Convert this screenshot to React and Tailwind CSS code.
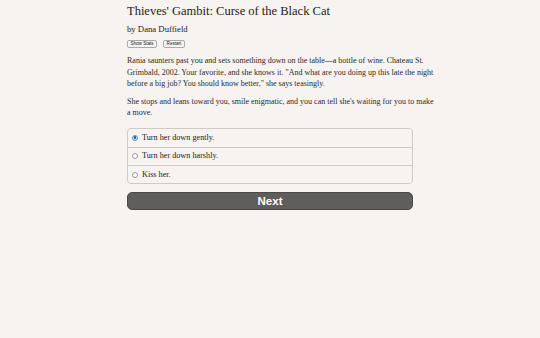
import { useState } from 'react';

const choices = ['Turn her down gently.', 'Turn her down harshly.', 'Kiss her.'];

const para1 = [
    'Rania saunters past you and sets something down on the table—a bottle of wine. Chateau St.',
    'Grimbald, 2002. Your favorite, and she knows it. "And what are you doing up this late the night',
    'before a big job? You should know better," she says teasingly.',
];
const para2 = [
    "She stops and leans toward you, smile enigmatic, and you can tell she's waiting for you to make",
    'a move.',
];

export default function App() {
    const [selected, setSelected] = useState(0);

    return (
        <div className="min-h-[338px] bg-[#f7f3f0] text-[#222] font-['Liberation_Serif',serif]">
            <div className="w-[286px] ml-[127px] pt-[2px]">
                <h1 className="text-[12.5px] leading-[18px] text-[#222]">Thieves' Gambit: Curse of the Black Cat</h1>
                <p className="text-[8.7px] leading-[12px] mt-[3px]">by Dana Duffield</p>

                {/* stats / restart */}
                <div className="flex gap-[6px] mt-[5px]">
                    <button className="h-[8px] w-[30px] text-[4.6px] leading-[6px] font-['Liberation_Sans',sans-serif] border border-[#aaa] rounded-[2px] bg-[#f4f4f4]">Show Stats</button>
                    <button className="h-[8px] w-[22px] text-[4.6px] leading-[6px] font-['Liberation_Sans',sans-serif] border border-[#aaa] rounded-[2px] bg-[#f4f4f4]">Restart</button>
                </div>

                <div className="text-[8px] leading-[11.5px] mt-[7px] text-[#2a2a2a] whitespace-nowrap">
                    {para1.map(l => <p key={l}>{l}</p>)}
                </div>
                <div className="text-[8px] leading-[11.5px] mt-[6px] text-[#2a2a2a] whitespace-nowrap">
                    {para2.map(l => <p key={l}>{l}</p>)}
                </div>

                <div className="mt-[9px] border border-[#cfcac6] rounded-[4px] overflow-hidden">
                    {choices.map((c, i) => (
                        <label
                            key={c}
                            onClick={() => setSelected(i)}
                            className={`flex items-center gap-[4px] h-[18.3px] px-[4px] text-[8.2px] cursor-pointer ${i > 0 ? 'border-t border-[#cfcac6]' : ''}`}
                        >
                            <span className={`w-[6px] h-[6px] rounded-full border flex items-center justify-center ${selected === i ? 'border-[#5a8fd0] bg-[#cfe0f5]' : 'border-[#999] bg-white'}`}>
                                {selected === i && <span className="w-[2.5px] h-[2.5px] rounded-full bg-[#2a4f80]" />}
                            </span>
                            {c}
                        </label>
                    ))}
                </div>

                <button className="mt-[8px] w-full h-[18px] rounded-[5px] bg-[#5f5e5c] border border-[#4a4948] text-white font-bold text-[11.5px] font-['Liberation_Sans',sans-serif] leading-none">
                    Next
                </button>
            </div>
        </div>
    );
}
